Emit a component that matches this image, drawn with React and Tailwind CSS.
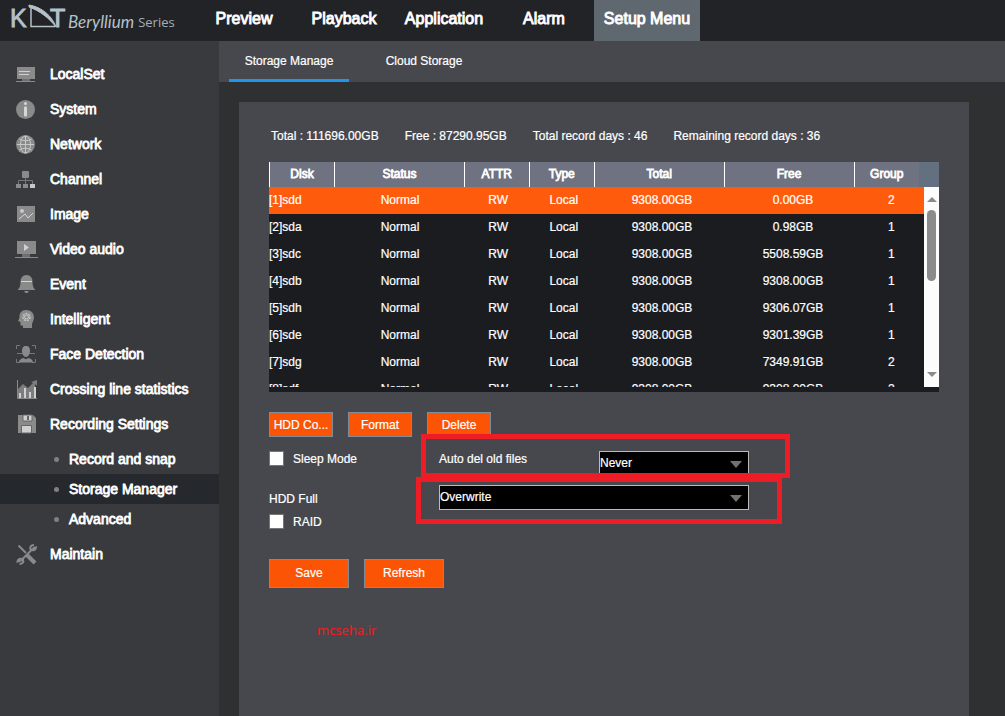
import React, { useState } from 'react';

const NAV = ['Preview', 'Playback', 'Application', 'Alarm', 'Setup Menu'];

const DISKS = [
    { disk: '[1]sdd', free: '0.00GB', group: 2 },
    { disk: '[2]sda', free: '0.98GB', group: 1 },
    { disk: '[3]sdc', free: '5508.59GB', group: 1 },
    { disk: '[4]sdb', free: '9308.00GB', group: 1 },
    { disk: '[5]sdh', free: '9306.07GB', group: 1 },
    { disk: '[6]sde', free: '9301.39GB', group: 1 },
    { disk: '[7]sdg', free: '7349.91GB', group: 2 },
    { disk: '[8]sdf', free: '9308.00GB', group: 2 },
];

const ICONS = {
    LocalSet: (
        <>
            <rect x="2" y="4" width="18" height="12" fill="#8a8a8a" />
            <path d="M4 8.5h11M4 11.5h10" stroke="#d0d0d0" />
            <path d="M7 16h8v2H7z" fill="#6f6f6f" />
            <path d="M1 18.5h19" stroke="#8a8a8a" />
        </>
    ),
    System: (
        <>
            <circle cx="10.5" cy="11.5" r="9.5" fill="#8a8a8a" />
            <circle cx="10.5" cy="5.5" r="1.5" fill="#d6d6d6" />
            <rect x="9" y="8.5" width="3" height="10" rx="1" fill="#d6d6d6" />
        </>
    ),
    Network: (
        <>
            <circle cx="10.5" cy="11.5" r="9.5" fill="#8a8a8a" />
            <g fill="none" stroke="#c8c8c8">
                <path d="M2 11.5h17M10.5 3v17" />
                <ellipse cx="10.5" cy="11.5" rx="5" ry="8.5" />
                <path d="M4.5 6c4 2.4 8 2.4 12 0M4.5 17c4-2.4 8-2.4 12 0" />
            </g>
        </>
    ),
    Channel: (
        <>
            <rect x="7" y="3" width="7" height="7" rx="1" fill="#8a8a8a" />
            <path d="M10.5 10v6M3.5 16v-3.5h14V16" fill="none" stroke="#777" />
            <rect x="1" y="16" width="5" height="4" fill="#8a8a8a" />
            <rect x="8" y="16" width="5" height="4" fill="#8a8a8a" />
            <rect x="15" y="16" width="5" height="4" fill="#c8c8c8" />
        </>
    ),
    Image: (
        <>
            <rect x="2" y="3" width="18" height="16" fill="#8a8a8a" />
            <circle cx="7" cy="8" r="2" fill="#c8c8c8" />
            <path d="M4 16l6-5 3 4 5-5" fill="none" stroke="#d6d6d6" />
        </>
    ),
    'Video audio': (
        <>
            <rect x="2" y="3" width="19" height="13" fill="#8a8a8a" />
            <path d="M9 6v7l5-3.5z" fill="#d0d0d0" />
            <path d="M7 16h8v3H7z" fill="#6f6f6f" />
            <path d="M0 19.5h23" stroke="#8a8a8a" />
        </>
    ),
    Event: (
        <>
            <path d="M11.5 2c4 0 6 3 6 6.5 0 4 .5 6 3 8.5H2.500c2.500-2.500 3-4.500 3-8.500 0-3.500 2-6.500 6-6.500z" fill="#8a8a8a" />
            <path d="M6 8.5h11" stroke="#d6d6d6" />
            <path d="M9 18h5l-1.5 2h-2z" fill="#8a8a8a" />
        </>
    ),
    Intelligent: (
        <>
            <path d="M11 2c5 0 8 3 8 7.5 0 3-2 5-2 7V20H8v-2.5H5.500V14L3 13l1.500-3C4 5 6.500 2 11 2z" fill="#8a8a8a" />
            <circle cx="11.5" cy="9" r="3.5" fill="none" stroke="#c8c8c8" strokeWidth="1.5" strokeDasharray="2 1" />
            <circle cx="11.5" cy="9" r="2" fill="none" stroke="#c8c8c8" />
        </>
    ),
    'Face Detection': (
        <>
            <path d="M1.5 6V2.500H5M17 2.500h3.500V6M1.500 16v3.500H5M17 19.500h3.500V16M2 10.500h18" fill="none" stroke="#777" />
            <path d="M11 3c3 0 4 2 4 5s-2 6-4 6-4-3-4-6 1-5 4-5zM4 19.500c0-3 3-4 4.500-4.500 2 1.500 3 1.500 5 0 1.500.5 4.500 1.500 4.500 4.500z" fill="#8a8a8a" />
        </>
    ),
    'Crossing line statistics': (
        <>
            <path d="M2.5 2v18.500H22" fill="none" stroke="#8a8a8a" />
            <path d="M3 11l5-5 5 4 5-5-2-1 6-2v6l-2-2v14H3z" fill="#7d7d7d" />
            <path d="M5 20v-5M10 20V10M15 20v-6M20 20V9" stroke="#d0d0d0" strokeWidth="2" />
        </>
    ),
    'Recording Settings': (
        <>
            <path d="M3 2h15l3 3v15H3z" fill="#8a8a8a" />
            <path d="M8 2h9v6H8z" fill="#d0d0d0" stroke="#666" />
            <rect x="12" y="3" width="2" height="4" fill="#666" />
            <path d="M6.5 12.5h10V20h-10z" fill="#d0d0d0" stroke="#666" />
        </>
    ),
    Maintain: (
        <g fill="none" stroke="#8a8a8a">
            <path d="M3.5 2.5L11 10" strokeWidth="2" />
            <path d="M12 12l8 8" strokeWidth="4" />
            <path d="M5.5 18L18 5.5" strokeWidth="2" />
            <path d="M19 2c-3 0-4.500 2-3.500 4.500C18 8 20.500 7 21 4.500l-3 .5M4.500 21c3 0 4.500-2 3.500-4.500C5.500 15 3 16 2.500 18.500l3-.5" strokeWidth="2" />
        </g>
    ),
};

const MENU = Object.keys(ICONS);
const SUB_MENU = ['Record and snap', 'Storage Manager', 'Advanced'];

const Logo = () => (
    <a href="#home" className="flex w-[194px] shrink-0 items-start pl-[10px] whitespace-nowrap">
        <svg width="58" height="36" viewBox="0 0 58 36" className="shrink-0" fill="#b4c1c9" stroke="#b4c1c9">
            <text x="0" y="27" fontFamily="Liberation Sans" fontSize="25" strokeWidth="0.8">K</text>
            <text x="40" y="27" fontFamily="Liberation Sans" fontSize="25" strokeWidth="1">T</text>
            <path d="M21 7v19.500h24" fill="none" strokeWidth="1.5" />
            <path d="M19 5c13 2 23 11 27 22-7-9-16-16-27-20z" strokeWidth="1" />
        </svg>
        <span className="mt-3 font-['Lato'] text-[17px] leading-5 text-[#b4c1c9] italic">Beryllium</span>
        <span className="mt-3 ml-1 font-['Open_Sans'] text-[13px] leading-5 text-[#a4b0b8]">Series</span>
    </a>
);

const Sidebar = ({ active, onSelect }) => (
    <aside className="w-[219px] shrink-0 bg-[#393a3e] pt-[15px] text-sm [-webkit-text-stroke:0.8px_white]">
        {MENU.map((name) => (
            <div key={name}>
                <a href="#menu" className="flex h-[35px] items-center gap-3 pl-[15px]">
                    <svg width="23" height="22" viewBox="0 0 23 22" className="shrink-0">{ICONS[name]}</svg>
                    {name}
                </a>
                {name === 'Recording Settings' && (
                    <div className="pt-[3px] pb-[2px]">
                        {SUB_MENU.map((sub) => (
                            <a
                                key={sub}
                                href="#sub"
                                onClick={() => onSelect(sub)}
                                className={`flex h-[30px] items-center gap-[10px] pl-[54px] ${sub === active ? 'bg-[#25282d]' : ''}`}
                            >
                                <span className="size-[5px] rounded-full bg-[#808080]" />
                                {sub}
                            </a>
                        ))}
                    </div>
                )}
            </div>
        ))}
    </aside>
);

const Columns = () => (
    <colgroup>
        <col className="w-[10%]" />
        <col className="w-[20%]" />
        <col className="w-[10%]" />
        <col className="w-[10%]" />
        <col className="w-[20%]" />
        <col className="w-[20%]" />
        <col className="w-[10%]" />
    </colgroup>
);

const DiskTable = ({ selected, onSelect }) => (
    <div className="bg-[#1b1c20] pb-[5px]">
        <div className="flex bg-[#62707f]">
            <table className="w-full table-fixed bg-[#6f7280]">
                <Columns />
                <thead>
                    <tr className="h-[25px] [-webkit-text-stroke:0.8px_white]">
                        {['Disk', 'Status', 'ATTR', 'Type', 'Total', 'Free', 'Group'].map((h) => (
                            <th key={h} className="border-l border-white p-0 pb-[2px] font-normal">{h}</th>
                        ))}
                    </tr>
                </thead>
            </table>
            <div className="w-5 shrink-0" />
        </div>
        <div className="flex h-[200px] overflow-hidden">
            <table className="h-[216px] w-full table-fixed text-center">
                <Columns />
                <tbody>
                    {DISKS.map((d, i) => (
                        <tr
                            key={d.disk}
                            onClick={() => onSelect(i)}
                            className={`h-[27px] ${i === selected ? 'bg-[#ff5b0c]' : ''}`}
                        >
                            <td className="p-0 pb-[2px] text-left">{d.disk}</td>
                            <td className="p-0 pb-[2px]">Normal</td>
                            <td className="p-0 pb-[2px]">RW</td>
                            <td className="p-0 pb-[2px]">Local</td>
                            <td className="p-0 pb-[2px]">9308.00GB</td>
                            <td className="p-0 pb-[2px]">{d.free}</td>
                            <td className="p-0 pb-[2px]">{d.group}</td>
                        </tr>
                    ))}
                </tbody>
            </table>
            {/* scrollbar */}
            <div className="flex w-[15px] shrink-0 flex-col items-center bg-[#fcfcfc] py-[10px]">
                <svg width="10" height="5" viewBox="0 0 10 5" className="shrink-0"><path d="M5 0l5 5H0z" fill="#8a8a8a" /></svg>
                <div className="mt-2 h-[71px] w-[9px] rounded-full bg-[#8b8b8b]" />
                <svg width="10" height="5" viewBox="0 0 10 5" className="mt-auto shrink-0"><path d="M0 0h10L5 5z" fill="#8a8a8a" /></svg>
            </div>
        </div>
    </div>
);

const Select = ({ id, options, className }) => (
    <div className={`relative ${className}`}>
        <select id={id} className="block h-[25px] w-full appearance-none border border-[#bbbbbb] bg-black pb-px text-xs outline-none">
            {options.map((o) => <option key={o}>{o}</option>)}
        </select>
        <svg width="12" height="7" viewBox="0 0 12 7" className="pointer-events-none absolute top-[10px] right-[7px]">
            <path d="M0 0h12L6 7z" fill="#717171" />
        </svg>
    </div>
);

const Check = ({ label }) => (
    <label className="flex h-[15px] items-center gap-[9px]">
        <input type="checkbox" className="size-[15px] appearance-none border border-[#767676] bg-white checked:bg-[#fb5404]" />
        {label}
    </label>
);

const App = () => {
    const [page, setPage] = useState('Storage Manager');
    const [tab, setTab] = useState('Storage Manage');
    const [disk, setDisk] = useState(0);

    return (
        <div className="flex min-h-screen flex-col bg-[#2f3032] font-['Liberation_Sans',Arial,sans-serif] text-white">
            <header className="flex h-[41px] bg-[#222327]">
                <Logo />
                <nav className="flex text-base [-webkit-text-stroke:0.9px_white]">
                    {NAV.map((item) => (
                        <a
                            key={item}
                            href="#nav"
                            className={`flex items-center justify-center pb-1 whitespace-nowrap ${
                                item === 'Setup Menu' ? 'w-[106px] bg-[#5f676f]' : 'w-[100px]'
                            }`}
                        >
                            {item}
                        </a>
                    ))}
                </nav>
            </header>

            <div className="flex flex-1">
                <Sidebar active={page} onSelect={setPage} />

                <div className="flex min-w-0 flex-1 flex-col text-xs [-webkit-text-stroke:0.2px_white]">
                    <div className="flex h-[41px] gap-[15px] bg-[#47484d] pl-[10px]">
                        {['Storage Manage', 'Cloud Storage'].map((t) => (
                            <button
                                key={t}
                                onClick={() => setTab(t)}
                                className={`w-[120px] border-b-[3px] pt-px ${t === tab ? 'border-[#1e96ea]' : 'border-transparent'}`}
                            >
                                {t}
                            </button>
                        ))}
                    </div>

                    <main className="mt-5 mr-9 ml-5 flex-1 bg-[#47484d] px-[30px] pt-[26px]">
                        <div className="mb-[18px] flex gap-[26px] pl-[2px] whitespace-nowrap">
                            <span>Total : 111696.00GB</span>
                            <span>Free : 87290.95GB</span>
                            <span>Total record days : 46</span>
                            <span>Remaining record days : 36</span>
                        </div>

                        <DiskTable selected={disk} onSelect={setDisk} />

                        <div className="mt-5 flex gap-[15px]">
                            {['HDD Co...', 'Format', 'Delete'].map((b) => (
                                <button key={b} className="h-[25px] w-16 border border-[#808d98] bg-[#fb5404] whitespace-nowrap">{b}</button>
                            ))}
                        </div>

                        <div className="relative mt-[14px]">
                            <div className="mb-[9px] flex h-[25px]">
                                <div className="w-[170px]"><Check label="Sleep Mode" /></div>
                                <label htmlFor="auto-del" className="w-40 leading-4">Auto del old files</label>
                                <Select id="auto-del" options={['Never', 'Customized']} className="w-[150px]" />
                            </div>
                            <div className="mb-1 flex items-center">
                                <label htmlFor="hdd-full" className="w-[170px] pt-[2px]">HDD Full</label>
                                <Select id="hdd-full" options={['Overwrite', 'Stop']} className="w-[310px]" />
                            </div>
                            <Check label="RAID" />

                            {/* highlight frames over the two drop-downs */}
                            <div className="pointer-events-none absolute -top-[17px] left-[152px] h-[44px] w-[369px] border-[5px] border-[#ee1c24]" />
                            <div className="pointer-events-none absolute top-[26px] left-[147px] h-[47px] w-[366px] border-[5px] border-[#ee1c24]" />
                        </div>

                        <div className="mt-[30px] flex gap-[15px]">
                            {['Save', 'Refresh'].map((b) => (
                                <button key={b} className="h-[29px] w-20 border border-[#808d98] bg-[#fb5404] pb-[2px]">{b}</button>
                            ))}
                        </div>

                        <p className="mt-8 pl-12 font-['Noto_Sans'] text-[13px] leading-5 text-[#ee1c24] [-webkit-text-stroke:0]">mcseha.ir</p>
                    </main>
                </div>
            </div>
        </div>
    );
};

export default App;
